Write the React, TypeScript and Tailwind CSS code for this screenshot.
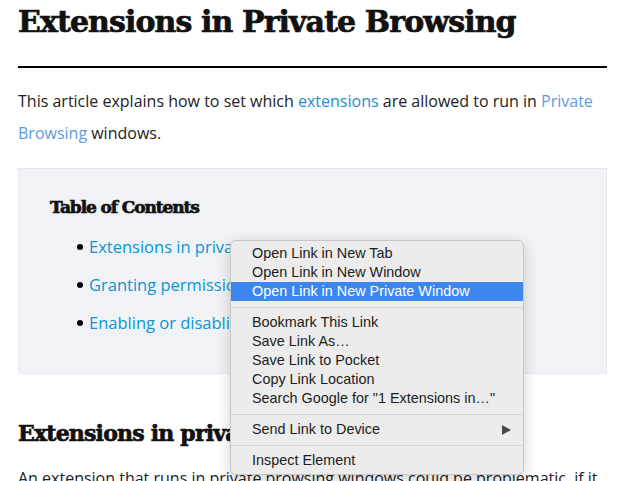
import React from "react";

const slab = "font-['DejaVu_Serif',serif] font-bold [-webkit-text-stroke:0.7px_#111]";
const sans = "font-['Open_Sans',sans-serif]";

const tocItems = [
  "Extensions in private windows",
  "Granting permission to run in private windows",
  "Enabling or disabling extensions in private windows",
];

type MenuEntry = { label: string; active?: boolean; submenu?: boolean } | "sep";

const menu: MenuEntry[] = [
  { label: "Open Link in New Tab" },
  { label: "Open Link in New Window" },
  { label: "Open Link in New Private Window", active: true },
  "sep",
  { label: "Bookmark This Link" },
  { label: "Save Link As…" },
  { label: "Save Link to Pocket" },
  { label: "Copy Link Location" },
  { label: 'Search Google for "1 Extensions in…"' },
  "sep",
  { label: "Send Link to Device", submenu: true },
  "sep",
  { label: "Inspect Element" },
];

function ContextMenu() {
  return (
    <div className="absolute left-[230px] top-[240px] w-[294px] h-[235px] rounded-[6px] border border-[#c6c6c6] bg-[#ececec] shadow-[0_4px_14px_rgba(0,0,0,0.18)] py-[3px] font-['Liberation_Sans',Arial,sans-serif] text-[14.4px] text-[#1c1c1c]">
      {menu.map((m, i) =>
        m === "sep" ? (
          <div key={i} className="h-[12px] flex items-center">
            <div className="w-full h-px bg-[#d6d6d6]" />
          </div>
        ) : (
          <div
            key={i}
            className={
              m.active
                ? "h-[19px] flex items-center justify-between pl-[21px] pr-[12px] bg-[#3d86ee] text-white"
                : "h-[19px] flex items-center justify-between pl-[21px] pr-[12px]"
            }
          >
            <span className="leading-none">{m.label}</span>
            {m.submenu && (
              <svg width="9" height="10" viewBox="0 0 9 10">
                <polygon points="0,0 9,5 0,10" fill="#4a4a4a" />
              </svg>
            )}
          </div>
        )
      )}
    </div>
  );
}

export default function App() {
  return (
    <div className="relative w-[639px] h-[481px] overflow-hidden bg-white">
      <div className="pl-[18px] w-[607px]">
        <h1 className={`${slab} text-[30px] leading-[40px] tracking-[-0.9px] mt-[2px] text-[#111]`}>
          Extensions in Private Browsing
        </h1>
        <div className="mt-[24px] h-[2px] bg-black" />
        <p className={`${sans} mt-[17px] text-[16px] leading-[32px] text-[#222]`}>
          This article explains how to set which{" "}
          <a className="text-[#1a8fd2]">extensions</a> are allowed to run in{" "}
          <a className="text-[#5c9be3]">Private Browsing</a> windows.
        </p>
        <div className="mt-[19px] h-[206px] border border-[#e6e8ec] bg-[#f1f2f5] pl-[31px] pt-[27px]">
          <h3 className={`${slab} text-[17px] leading-[22px] tracking-[-1.1px] text-[#111] [-webkit-text-stroke:0.4px_#111]`}>
            Table of Contents
          </h3>
          <ul className={`${sans} mt-[17px] flex flex-col gap-[14px]`}>
            {tocItems.map((t) => (
              <li key={t} className="flex items-center h-[24px]">
                <span className="ml-[27px] w-[6px] h-[6px] rounded-full bg-black" />
                <span className="ml-[6px] text-[16.5px] leading-[24px] text-[#0996d6] whitespace-nowrap">
                  {t}
                </span>
              </li>
            ))}
          </ul>
        </div>
        <h2 className={`${slab} mt-[44px] text-[22px] leading-[30px] tracking-[-0.8px] text-[#111] [-webkit-text-stroke:0.5px_#111]`}>
          Extensions in private windows
        </h2>
        <p className={`${sans} mt-[14px] text-[16px] leading-[32px] text-[#222] whitespace-nowrap`}>
          An extension that runs in private browsing windows could be problematic, if it
        </p>
      </div>
      <ContextMenu />
    </div>
  );
}
